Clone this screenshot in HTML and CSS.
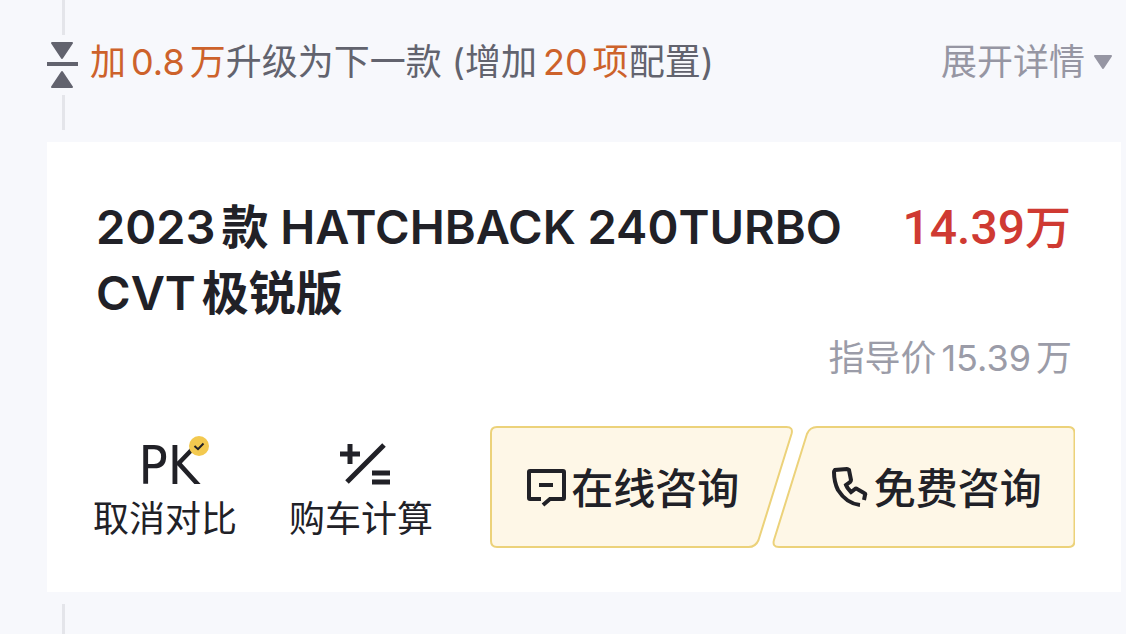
FILE: index.html
```html
<!DOCTYPE html>
<html lang="zh-CN">
<head>
    <meta charset="UTF-8">
    <meta name="viewport" content="width=device-width, initial-scale=1.0">
    <title>车型对比</title>
    <link rel="stylesheet" href="styles.css">
</head>
<body>
    <main class="page">
        <section class="upgrade">
            <div class="rail">
                <span class="rail-line"></span>
                <svg class="rail-icon" viewBox="0 0 32 46" aria-hidden="true">
                    <path d="M5 1H25L15 16Z"/>
                    <path d="M5 45H25L15 30Z"/>
                    <rect class="bar" x="0" y="20" width="31" height="4"/>
                </svg>
                <span class="rail-line"></span>
            </div>
            <p class="upgrade-text"><em>加<span class="num">0.8</span>万</em>升级为下一款 (增加<em class="count">20<span class="unit">项</span></em>配置)</p>
            <button type="button" class="toggle">展开详情
                <svg class="toggle-arrow" viewBox="0 0 20 16" aria-hidden="true"><path d="M2 2H18L10 14Z"/></svg>
            </button>
        </section>

        <article class="card">
            <div class="card-head">
                <h2 class="title">2023<span class="cjk">款</span> HATCHBACK 240TURBO CVT<span class="cjk">极锐版</span></h2>
                <div class="price"><span class="price-num">14.39</span>万</div>
            </div>
            <p class="guide">指导价<span class="num">15.39</span>万</p>

            <div class="card-foot">
                <button type="button" class="tool">
                    <span class="tool-icon pk">PK
                        <svg class="badge" viewBox="0 0 20 20" aria-hidden="true">
                            <circle cx="10" cy="10" r="10"/>
                            <path d="M5.5 10L9 13.2L14.5 7.5"/>
                        </svg>
                    </span>
                    <span class="tool-label">取消对比</span>
                </button>
                <button type="button" class="tool">
                    <span class="tool-icon">
                        <svg class="calc" viewBox="-10 0 62 50" aria-hidden="true">
                            <path d="M0 13H20M10 3V23M7 41L44 4M32 32H50M32 41H50"/>
                        </svg>
                    </span>
                    <span class="tool-label">购车计算</span>
                </button>

                <div class="consult">
                    <button type="button" class="consult-btn">
                        <svg class="shape" viewBox="0 0 304 122" preserveAspectRatio="none" aria-hidden="true">
                            <path d="M7 1H297Q304 1 302 8L269 114Q266 121 259 121H7Q1 121 1 115V7Q1 1 7 1Z"/>
                        </svg>
                        <svg class="icon chat" viewBox="0 0 40 40" aria-hidden="true">
                            <path d="M15 32H4Q3 32 3 31V5Q3 4 4 4H37Q38 4 38 5V31Q38 32 37 32H24L17 38M13 18H27"/>
                        </svg>
                        <span class="consult-label">在线咨询</span>
                    </button>
                    <button type="button" class="consult-btn">
                        <svg class="shape" viewBox="0 0 304 122" preserveAspectRatio="none" aria-hidden="true">
                            <path d="M45 1H297Q303 1 303 7V115Q303 121 297 121H7Q0 121 2 114L35 8Q38 1 45 1Z"/>
                        </svg>
                        <svg class="icon phone" viewBox="0 0 40 40" aria-hidden="true">
                            <path d="M31 38C22 37 14 31 9 23C6 17 5 11 5 5Q5 4 6 3L18 2Q19 2 20 3L22 13Q22 14 21 15L17 18C18 21 20 23 22 25L26 22Q27 21 28 22L35 26Q37 27 36 28L35 33"/>
                        </svg>
                        <span class="consult-label">免费咨询</span>
                    </button>
                </div>
            </div>
        </article>

        <div class="rail rail-next"><span class="rail-line"></span></div>
    </main>
</body>
</html>
```

FILE: styles.css
```css
* {
    box-sizing: border-box;
}
body {
    margin: 0;
    background-color: #f7f8fc;
    color: #212127;
    font-family: Inter, "Noto Sans CJK SC", sans-serif;
    font-size: 36px;
    line-height: 48px;
}
p,
h2 {
    margin: 0;
}
button {
    padding: 0;
    border: none;
    background: none;
    color: inherit;
    font: inherit;
    cursor: pointer;
}
.page {
    padding: 0 5px 0 47px;
}
em {
    color: #cd622b;
    font-style: normal;
}
.num {
    margin: 0 5px;
}
.count {
    margin-left: 6px;
}
.unit {
    margin-left: 5px;
}

/* 升级提示 */
.upgrade {
    display: flex;
    align-items: flex-start;
    padding-bottom: 12px;
    color: #62636e;
}
.rail {
    display: flex;
    flex-direction: column;
    align-items: center;
    gap: 7px;
    width: 32px;
}
.rail-line {
    width: 3px;
    height: 35px;
    background-color: #e4e5ea;
}
.rail-icon {
    width: 32px;
    height: 46px;
    fill: #62636e;
    stroke: #62636e;
    stroke-width: 2;
    stroke-linejoin: round;
}
.rail-icon .bar {
    stroke: none;
}
.rail-next {
    padding-top: 12px;
}
.upgrade-text {
    flex: 1;
    padding: 38px 0 0 11px;
}
.toggle {
    display: flex;
    align-items: center;
    gap: 8px;
    padding: 38px 8px 0 0;
    color: #9696a3;
}
.toggle-arrow {
    width: 20px;
    height: 16px;
    fill: #9696a3;
    stroke: #9696a3;
    stroke-width: 2;
    stroke-linejoin: round;
}

/* 车型卡片 */
.card {
    padding: 52px 46px 38px;
    background-color: #fff;
}
.card-head {
    display: flex;
    justify-content: space-between;
    gap: 40px;
}
.title {
    padding-left: 3px;
    font-size: 47px;
    font-weight: 600;
    line-height: 66px;
}
.title .cjk {
    margin-left: 6px;
}
.price {
    padding-right: 4px;
    color: #cf3a32;
    font-size: 46px;
    font-weight: 500;
    line-height: 66px;
    white-space: nowrap;
}
.price-num {
    font-family: Roboto, sans-serif;
    font-size: 48px;
}
.guide {
    padding: 8px 3px 0 0;
    color: #9b9ca8;
    text-align: right;
}
.card-foot {
    display: flex;
    align-items: center;
    margin-top: 38px;
    min-height: 134px;
}
.tool {
    display: flex;
    flex-direction: column;
    align-items: center;
    margin-right: 52px;
    padding-top: 6px;
}
.tool-icon {
    position: relative;
    display: flex;
    align-items: center;
    height: 58px;
}
.pk {
    padding-left: 8px;
    font-family: "DejaVu Sans Condensed", sans-serif;
    font-size: 54px;
}
.badge {
    position: absolute;
    top: -1px;
    right: -9px;
    width: 20px;
    height: 20px;
    fill: #f3c94f;
}
.badge path {
    fill: none;
    stroke: #212127;
    stroke-width: 2;
}
.calc {
    width: 62px;
    height: 50px;
    fill: none;
    stroke: #212127;
    stroke-width: 5;
}
.consult {
    display: flex;
    flex: 1;
    margin-left: 5px;
}
.consult-btn {
    position: relative;
    display: flex;
    flex: 1;
    align-items: center;
    justify-content: center;
    height: 122px;
    margin-right: -11px;
    padding: 0 21px 0 3px;
    font-size: 42px;
    font-weight: 500;
}
.consult-btn + .consult-btn {
    margin: 0 0 0 -11px;
    padding: 0 0 0 24px;
}
.shape {
    position: absolute;
    top: 0;
    left: 0;
    width: 100%;
    height: 100%;
    fill: #fef7e7;
    stroke: #ecd27a;
    stroke-width: 2;
}
.icon {
    position: relative;
    width: 40px;
    height: 40px;
    margin-right: 5px;
    fill: none;
    stroke: #212127;
    stroke-width: 4;
}
.consult-label {
    position: relative;
    padding-top: 4px;
}
```
